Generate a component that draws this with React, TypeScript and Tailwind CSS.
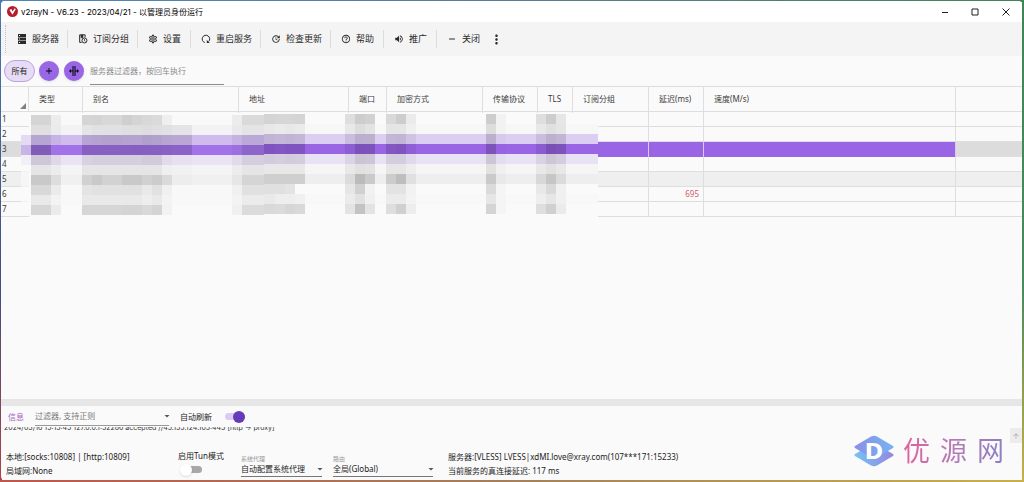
import React from "react";
import {
  MdStorage,
  MdOutlineSettings,
  MdUpdate,
  MdHelpOutline,
  MdVolumeUp,
  MdRemove,
  MdMoreVert,
  MdAdd,
  MdArrowDropDown,
  MdArrowUpward,
} from "react-icons/md";

function AppIcon() {
  return (
    <svg viewBox="0 0 24 24" className="size-[11px]" aria-hidden="true">
      <circle cx="12" cy="12" r="12" fill="#b3202c" />
      <path d="M5 8l5-1 2 5 5-7 2 2-7 12z" fill="#fff" />
    </svg>
  );
}

function ServerIcon() {
  return (
    <svg viewBox="0 0 10 10" className="size-2.5" aria-hidden="true">
      <path d="M1 0h8v3H1zM1 3.500h8v3H1zM1 7h8v3H1z" fill="currentColor" />
      <path d="M2 1h1v1H2zM2 4.500h1v1H2zM2 8h1v1H2z" fill="#f4f4f4" />
    </svg>
  );
}

function SubscriptionIcon() {
  return (
    <svg viewBox="0 0 24 24" className="size-2.5" fill="none" stroke="currentColor" strokeWidth="2.4" aria-hidden="true">
      <path d="M9 20H4V2h13v6" />
      <path d="M7 2v8l2.500-2L12 10V2" fill="currentColor" strokeWidth="1" />
      <circle cx="15.500" cy="15.500" r="6" />
      <path d="M15.500 12v4l2.500 1.500" strokeWidth="2" />
    </svg>
  );
}

function RestartIcon() {
  return (
    <svg viewBox="0 0 24 24" className="size-2.5" fill="none" stroke="currentColor" strokeWidth="2.4" aria-hidden="true">
      <path d="M9 20.500A9 9 0 1 1 18.500 18" />
      <path d="M14 14.500v7h7z" fill="currentColor" stroke="none" />
    </svg>
  );
}

function SplitIcon() {
  return (
    <svg viewBox="0 0 24 24" className="size-3" fill="currentColor" aria-hidden="true">
      <path d="M9 2h2v20H9zM13 2h2v20h-2zM6 8v3h3v2H6v3l-4-4zM18 8v3h-3v2h3v3l4-4z" />
    </svg>
  );
}

const tools = [
  { label: "服务器", icon: <ServerIcon /> },
  { label: "订阅分组", icon: <SubscriptionIcon /> },
  { label: "设置", icon: <MdOutlineSettings className="size-2.5" /> },
  { label: "重启服务", icon: <RestartIcon /> },
  { label: "检查更新", icon: <MdUpdate className="size-2.5" /> },
  { label: "帮助", icon: <MdHelpOutline className="size-2.5" /> },
  { label: "推广", icon: <MdVolumeUp className="size-2.5" /> },
];

function TitleBar() {
  return (
    <header className="flex h-[21px] items-center bg-white pl-1.5">
      <AppIcon />
      <h1 className="ml-[3px] flex-1 font-['Inter','Noto_Sans_CJK_SC',sans-serif] text-[8px] leading-3 text-black">
        v2rayN - V6.23 - 2023/04/21 - 以管理员身份运行
      </h1>
      <div className="flex items-center text-[#222]">
        <button aria-label="最小化" className="flex h-5 w-[30px] items-center justify-center">
          <svg viewBox="0 0 8 8" className="size-2" stroke="currentColor" aria-hidden="true"><path d="M1 4.500h6" /></svg>
        </button>
        <button aria-label="最大化" className="flex h-5 w-[30px] items-center justify-center">
          <svg viewBox="0 0 8 8" className="size-2" fill="none" stroke="currentColor" aria-hidden="true"><path d="M1 1h6v6H1z" /></svg>
        </button>
        <button aria-label="关闭窗口" className="flex h-5 w-8 items-center justify-center">
          <svg viewBox="0 0 8 8" className="size-2" fill="none" stroke="currentColor" aria-hidden="true"><path d="M.5.5l7 7M7.500.5l-7 7" /></svg>
        </button>
      </div>
    </header>
  );
}

function Toolbar() {
  return (
    <nav className="flex h-[34px] items-center bg-[#f4f4f4] text-[9px] leading-3 text-[#2a2a2a]">
      <span className="ml-1 h-7 w-0.5 border-l border-dotted border-[#c4c4c4]" />
      {tools.map((t) => (
        <button key={t.label} className="flex h-[18px] min-w-[53px] items-center gap-[5px] border-r border-[#dcdcdc] pr-2 pl-2.5">
          {t.icon}
          <span>{t.label}</span>
        </button>
      ))}
      <button className="flex h-[18px] items-center gap-[5px] pr-2 pl-2.5">
        <MdRemove className="size-2.5" />
        <span>关闭</span>
      </button>
      <button aria-label="更多" className="flex size-4 items-center justify-center">
        <MdMoreVert className="size-[15px]" />
      </button>
    </nav>
  );
}

function FilterBar() {
  return (
    <div className="flex h-[30px] items-center pl-[3px]">
      <button className="h-[22px] w-[31px] rounded-full border border-[#b9a3dc] bg-[#e6dcf5] text-[8px] leading-3 text-[#222]">所有</button>
      <button aria-label="添加" className="ml-1 flex size-5 items-center justify-center rounded-full bg-[#9966e6] text-black shadow">
        <MdAdd className="size-2.5" />
      </button>
      <button aria-label="自动列宽" className="ml-[5px] flex size-5 items-center justify-center rounded-full bg-[#9966e6] text-black shadow">
        <SplitIcon />
      </button>
      <input
        aria-label="服务器过滤器"
        placeholder="服务器过滤器，按回车执行"
        className="ml-1.5 h-[27px] w-[134px] border-b border-[#8c8c8c] bg-transparent text-[8px] leading-3 outline-none placeholder:text-[#8a8a8a]"
      />
    </div>
  );
}

const columns = [
  { label: "类型", col: "w-[54px]" },
  { label: "别名", col: "w-[156px]" },
  { label: "地址", col: "w-[110px]" },
  { label: "端口", col: "w-[38px]" },
  { label: "加密方式", col: "w-[96px]" },
  { label: "传输协议", col: "w-[55px]" },
  { label: "TLS", col: "w-[35px]" },
  { label: "订阅分组", col: "w-[76px]" },
  { label: "延迟(ms)", col: "w-[55px]" },
  { label: "速度(M/s)", col: "w-[252px]" },
];

/* Pixelated cover over private server data: ten bands of 10px cells. */
const leftBands = ["#f9f9f9", "#f3f2f4", "#d0bbef", "#a273e8", "#ebe3f5", "#f5f4f5", "#f0f0f0", "#f8f8f8", "#f8f8f8", "#fafafa"];
const rightBands = ["#fafafa", "#f7f7f7", "#dccdf2", "#9965e5", "#e9e2f5", "#f5f5f5", "#eeeeee", "#fafafa", "#f9f8f9", "#fafafa"];

type Shade = [x: number, w: number, a: number[]];

const leftShades: Shade[] = [
  [31, 20, [14, 8, 12, 20, 12, 6, 16, 13, 6, 14]],
  [51, 10, [5, 3, 4, 0, 5, 3, 8, 5, 2, 6]],
  [82, 10, [14, 6, 12, 16, 8, 6, 13, 8, 6, 14]],
  [92, 10, [15, 7, 13, 16, 9, 6, 16, 9, 6, 14]],
  [102, 20, [13, 7, 14, 16, 9, 6, 12, 9, 6, 14]],
  [122, 10, [17, 8, 13, 16, 9, 6, 16, 9, 6, 15]],
  [132, 10, [15, 8, 13, 17, 9, 6, 16, 9, 6, 15]],
  [142, 10, [13, 9, 15, 16, 11, 6, 13, 6, 4, 13]],
  [152, 10, [12, 8, 14, 16, 10, 6, 15, 9, 6, 15]],
  [162, 10, [4, 7, 12, 15, 3, 2, 9, 3, 2, 3]],
  [172, 20, [0, 6, 11, 14, 1, 1, 1, 0, 0, 0]],
  [232, 10, [5, 4, 5, 3, 4, 3, 4, 3, 2, 4]],
  [242, 22, [12, 6, 10, 12, 9, 6, 11, 9, 5, 12]],
];
const rightShades: Shade[] = [
  [264, 11, [15, 6, 12, 16, 10, 5, 13, 10, 6, 13]],
  [275, 10, [14, 5, 11, 15, 9, 5, 13, 10, 4, 12]],
  [285, 10, [14, 6, 12, 16, 10, 5, 13, 9, 4, 14]],
  [295, 10, [15, 5, 11, 16, 9, 5, 13, 0, 3, 13]],
  [345, 10, [11, 6, 8, 8, 6, 5, 8, 8, 5, 9]],
  [355, 10, [18, 10, 15, 19, 13, 8, 21, 17, 9, 22]],
  [365, 10, [16, 8, 14, 18, 12, 7, 15, 3, 3, 9]],
  [386, 10, [13, 7, 11, 14, 9, 6, 14, 9, 5, 11]],
  [396, 10, [18, 7, 12, 17, 9, 6, 20, 9, 5, 17]],
  [406, 10, [6, 3, 5, 6, 4, 3, 6, 3, 2, 5]],
  [486, 10, [18, 10, 15, 18, 12, 8, 15, 12, 7, 15]],
  [496, 10, [3, 2, 2, 1, 2, 2, 2, 2, 1, 2]],
  [536, 10, [11, 6, 8, 9, 7, 5, 9, 7, 4, 11]],
  [546, 10, [18, 9, 14, 20, 12, 8, 17, 13, 7, 17]],
  [556, 10, [8, 7, 12, 18, 9, 5, 8, 4, 3, 6]],
];

function Mosaic() {
  const band = (x: number, w: number, dy: number, fills: string[]) =>
    fills.map((f, i) => <rect key={`${x}-${i}`} x={x} y={114 + dy + i * 10} width={w} height={i === 9 ? 12 : 10} fill={f} />);
  const shade = (dy: number, list: Shade[]) =>
    list.flatMap(([x, w, a]) =>
      a.map((v, i) => <rect key={`${x}s${i}`} x={x} y={114 + dy + i * 10} width={w} height="10" fill="#000" fillOpacity={v / 100} />)
    );
  return (
    <svg viewBox="21 113 577 104" width="577" height="104" shapeRendering="crispEdges" className="absolute top-[27px] left-5" aria-hidden="true">
      <rect x="29" y="113" width="569" height="104" fill="#fafafa" />
      {band(31, 233, 1, leftBands)}
      <rect x="21" y="135" width="10" height="10" fill="#e4daf2" />
      <rect x="21" y="145" width="10" height="10" fill="#c9b4e6" />
      <rect x="21" y="155" width="10" height="10" fill="#f3eff8" />
      <rect x="21" y="165" width="10" height="51" fill="#fafafa" fillOpacity="0.7" />
      {band(264, 334, 0, rightBands)}
      {shade(1, leftShades)}
      {shade(0, rightShades)}
    </svg>
  );
}

function ServerTable() {
  const line = "border-[#dedede]";
  return (
    <div className="relative flex-1">
      <table className="w-full table-fixed border-separate border-spacing-0 text-[8px] leading-3 text-[#3c3c3c]">
        <colgroup>
          <col className="w-[28px]" />
          {columns.map((c) => (
            <col key={c.label} className={c.col} />
          ))}
          <col />
        </colgroup>
        <thead>
          <tr className="h-[26px]">
            <th className={`border-y border-r p-0 align-bottom ${line}`}>
              <svg viewBox="0 0 6 6" className="mb-0.5 ml-[19px] size-1.5" aria-hidden="true"><path d="M6 0v6H0z" fill="#808080" /></svg>
            </th>
            {columns.map((c) => (
              <th key={c.label} className={`border-y border-r p-0 pl-2.5 text-left font-normal whitespace-nowrap ${line}`}>{c.label}</th>
            ))}
            <th className={`border-y p-0 ${line}`} />
          </tr>
        </thead>
        <tbody>
          {[1, 2, 3, 4, 5, 6, 7].map((n) => {
            const selected = n === 3;
            const rowBg = n === 5 ? "bg-[#efefef]" : "";
            return (
              <tr key={n} className={`h-[15px] ${rowBg}`}>
                <th className={`border-b p-0 pl-px text-left font-normal ${line} ${selected ? "bg-[#dcdcdc]" : ""}`}>{n}</th>
                {columns.map((c) => (
                  <td
                    key={c.label}
                    className={`border-r p-0 pr-1 text-right text-[#cf5f6b] ${selected ? "border-r-[#d9c8f3] bg-[#9965e5]" : `border-b ${line}`}`}
                  >
                    {n === 6 && c.label === "延迟(ms)" ? "695" : null}
                  </td>
                ))}
                <td className={`border-b p-0 ${line} ${selected ? "bg-[#dcdcdc]" : ""}`} />
              </tr>
            );
          })}
        </tbody>
      </table>
      <Mosaic />
    </div>
  );
}

function LogPanel() {
  return (
    <section>
      <div className="flex h-[21px] items-center text-[8px] leading-3">
        <label htmlFor="log-filter" className="ml-[7px] text-[#a45fc4]">信息</label>
        <div className="ml-[11px] flex h-[18px] w-[134px] items-center border-b border-[#9a9a9a]">
          <input id="log-filter" placeholder="过滤器, 支持正则" className="min-w-0 flex-1 bg-transparent outline-none placeholder:text-[#777]" />
          <MdArrowDropDown className="-mr-1 size-3 text-[#555]" />
        </div>
        <label htmlFor="auto-refresh" className="ml-[11px] text-[#1c1c1c]">自动刷新</label>
        <input
          id="auto-refresh"
          type="checkbox"
          defaultChecked
          className="ml-[13px] flex h-[7px] w-5 appearance-none items-center justify-end rounded-full bg-[#d9cbf3] before:size-3 before:shrink-0 before:rounded-full before:bg-[#673ab7]"
        />
      </div>
      <div className="flex h-4 items-start overflow-hidden">
        <p className="-mt-[5px] flex-1 pl-[3px] font-['Inter',sans-serif] text-[7px] leading-3 text-[#333]">
          2024/03/16 15:15:45 127.0.0.1:52286 accepted //45.155.124.105:443 [http -&gt; proxy]
        </p>
        <button aria-label="向上滚动" className="mt-px flex h-[15px] w-3 items-center justify-center bg-[#ececec] text-[#aaa]">
          <MdArrowUpward className="size-2" />
        </button>
      </div>
    </section>
  );
}

function StatusSelect({ id, label, value, width }: { id: string; label: string; value: string; width: string }) {
  return (
    <div className={`flex flex-col border-b border-[#777] pb-px ${width}`}>
      <label htmlFor={id} className="text-[6px] leading-2 text-[#999]">{label}</label>
      <div className="flex items-center">
        <select id={id} className="min-w-0 flex-1 appearance-none bg-transparent text-[8px] leading-3 text-[#1c1c1c] outline-none">
          <option>{value}</option>
        </select>
        <MdArrowDropDown className="-mr-1 size-3 text-[#555]" />
      </div>
    </div>
  );
}

function BrandLogo() {
  return (
    <div className="flex items-center">
      <svg viewBox="0 0 42 32" className="h-8 w-[42px]" aria-hidden="true">
        <defs>
          <linearGradient id="layerTop" x1="0" x2="1">
            <stop offset="0" stopColor="#8b8fe6" />
            <stop offset="1" stopColor="#74b4f2" />
          </linearGradient>
          <linearGradient id="layerBottom" x1="0" x2="1">
            <stop offset="0" stopColor="#74c4f3" />
            <stop offset="1" stopColor="#9585e2" />
          </linearGradient>
        </defs>
        <path d="M21 8l19 11q1.500 1 0 2L24 30.500q-3 1.500-6 0L2 21q-1.500-1 0-2z" fill="url(#layerBottom)" />
        <path d="M18 1.500q3-1.500 6 0L40 11q1.500 1 0 2L24 22.500q-3 1.500-6 0L2 13q-1.500-1 0-2z" fill="url(#layerTop)" />
        <text x="21" y="23.500" textAnchor="middle" fontFamily="DejaVu Sans, sans-serif" fontWeight="700" fontSize="22" fill="#fff">D</text>
      </svg>
      <p className="ml-2 flex gap-2.5 bg-[linear-gradient(to_right,#e0609c,#b57ab5_50%,#8c80c4)] bg-clip-text text-[27px] leading-8 font-normal text-transparent">
        <span>优</span>
        <span>源</span>
        <span>网</span>
      </p>
    </div>
  );
}

function StatusBar() {
  return (
    <footer className="flex h-[37px] items-start text-[8px] leading-[14px] text-[#1c1c1c]">
      <div className="w-[172px] pt-[7px] pl-[5px]">
        <p>本地:[socks:10808] | [http:10809]</p>
        <p>局域网:None</p>
      </div>
      <div className="flex w-[68px] flex-col pt-[7px] pl-[5px]">
        <label htmlFor="tun-mode" className="leading-3">启用Tun模式</label>
        <input
          id="tun-mode"
          type="checkbox"
          className="mt-1 ml-1 flex h-[7px] w-5 appearance-none items-center rounded-full bg-[#a8a8a8] before:size-3 before:shrink-0 before:-translate-x-0.5 before:rounded-full before:bg-white before:shadow"
        />
      </div>
      <div className="flex gap-[11px] pt-3">
        <StatusSelect id="system-proxy" label="系统代理" value="自动配置系统代理" width="w-[81px]" />
        <StatusSelect id="route" label="路由" value="全局(Global)" width="w-[100px]" />
      </div>
      <div className="flex-1 pt-[7px] pl-[15px]">
        <p>服务器:[VLESS] LVESS|xdMI.love@xray.com(107***171:15233)</p>
        <p>当前服务的真连接延迟: 117 ms</p>
      </div>
      <div className="-mt-2 mr-[18px]">
        <BrandLogo />
      </div>
    </footer>
  );
}

export default function App() {
  return (
    <div className="flex min-h-screen flex-col bg-[linear-gradient(to_right,#c0564c,#a5805a_50%,#c9b04a),linear-gradient(to_bottom,#4a78ae,#3f4f80_60%,#b04048),linear-gradient(to_right,#4a88b8,#5c7c94_50%,#3f8558),linear-gradient(to_bottom,#3f8558,#4a8a5c_60%,#c9b04a)] bg-[size:100%_2px,2px_100%,100%_2px,2px_100%] bg-[position:bottom,left,top,right] bg-no-repeat p-px pr-0.5 pb-0.5 font-['Noto_Sans','Noto_Sans_CJK_SC',sans-serif]">
      <div className="flex flex-1 flex-col overflow-hidden rounded bg-[#fafafa]">
        <TitleBar />
        <Toolbar />
        <FilterBar />
        <ServerTable />
        <div className="h-[7px] bg-[#e6e6e6]" />
        <LogPanel />
        <StatusBar />
      </div>
    </div>
  );
}
